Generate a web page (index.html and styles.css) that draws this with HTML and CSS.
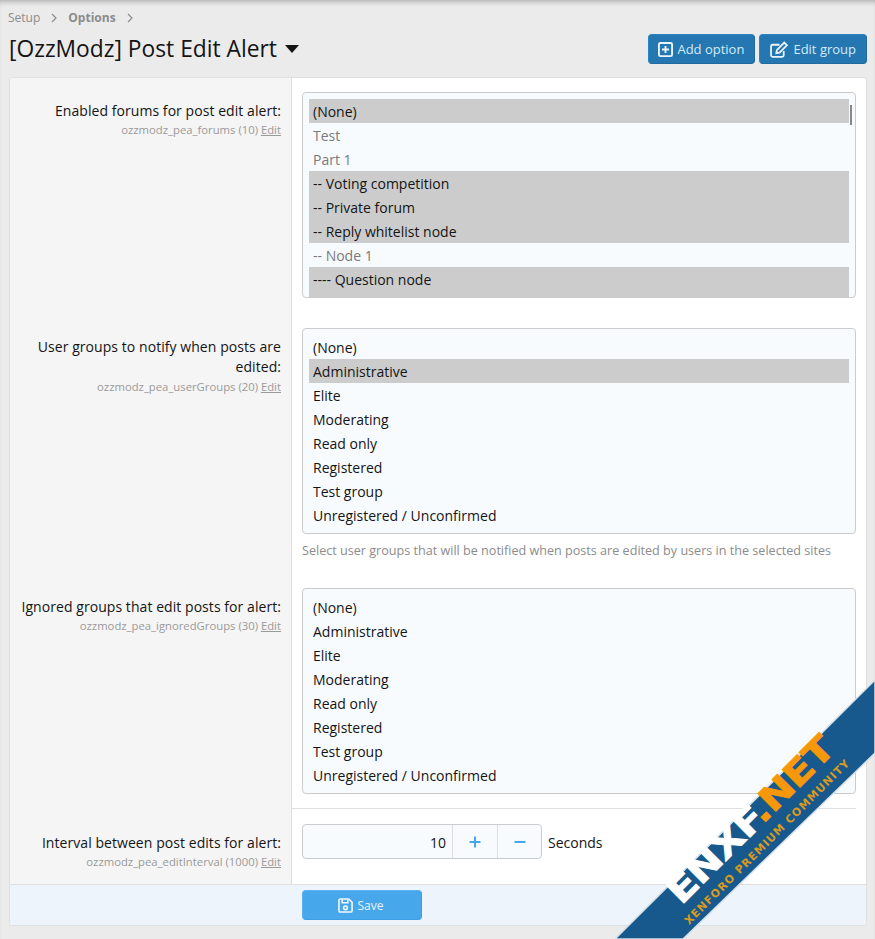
FILE: index.html
```html
<!DOCTYPE html>
<html lang="en">
<head>
  <meta charset="UTF-8" />
  <title>[OzzModz] Post Edit Alert</title>
  <meta name="viewport" content="width=device-width, initial-scale=1.0" />
  <link rel="stylesheet" href="styles.css">
</head>
<body>

  <div class="breadcrumbs">
    <span>Setup</span>
    <svg class="crumb-arrow" viewBox="0 0 6 10"><path d="M1 1l4 4-4 4" /></svg>
    <b>Options</b>
    <svg class="crumb-arrow" viewBox="0 0 6 10"><path d="M1 1l4 4-4 4" /></svg>
  </div>

  <div class="page-header">
    <h1>[OzzModz] Post Edit Alert <span class="caret"></span></h1>
    <div class="header-buttons">
      <a class="button">
        <svg viewBox="0 0 16 16"><rect x="1" y="1" width="14" height="14" rx="1.5" /><path d="M8 4.2v7.6M4.2 8h7.6" /></svg>
        Add option
      </a>
      <a class="button">
        <svg class="wide" viewBox="0 0 18 16"><path d="M13 9.5v4a1.5 1.5 0 0 1-1.500 1.500H2.500A1.500 1.500 0 0 1 1 13.500V5a1.500 1.500 0 0 1 1.500-1.500H9" /><path d="M6.500 8.500L13.500 1.500l2.500 2.500-7 7-3 .5z" /></svg>
        Edit group
      </a>
    </div>
  </div>

  <div class="block">
    <div class="form-row first">
      <div class="label-col">
        <div class="label">Enabled forums for post edit alert:</div>
        <div class="option-id">ozzmodz_pea_forums (10) <u>Edit</u></div>
      </div>
      <div class="input-col">
        <div class="listbox scrolling">
          <div class="opt sel">(None)</div>
          <div class="opt muted">Test</div>
          <div class="opt muted">Part 1</div>
          <div class="opt sel">-- Voting competition</div>
          <div class="opt sel">-- Private forum</div>
          <div class="opt sel">-- Reply whitelist node</div>
          <div class="opt muted">-- Node 1</div>
          <div class="opt sel">---- Question node</div>
          <div class="opt sel"></div>
          <div class="scroll-thumb"></div>
        </div>
      </div>
    </div>

    <div class="form-row">
      <div class="label-col">
        <div class="label">User groups to notify when posts are edited:</div>
        <div class="option-id">ozzmodz_pea_userGroups (20) <u>Edit</u></div>
      </div>
      <div class="input-col">
        <div class="listbox">
          <div class="opt">(None)</div>
          <div class="opt sel">Administrative</div>
          <div class="opt">Elite</div>
          <div class="opt">Moderating</div>
          <div class="opt">Read only</div>
          <div class="opt">Registered</div>
          <div class="opt">Test group</div>
          <div class="opt">Unregistered / Unconfirmed</div>
        </div>
        <div class="hint">Select user groups that will be notified when posts are edited by users in the selected sites</div>
      </div>
    </div>

    <div class="form-row">
      <div class="label-col">
        <div class="label">Ignored groups that edit posts for alert:</div>
        <div class="option-id">ozzmodz_pea_ignoredGroups (30) <u>Edit</u></div>
      </div>
      <div class="input-col">
        <div class="listbox">
          <div class="opt">(None)</div>
          <div class="opt">Administrative</div>
          <div class="opt">Elite</div>
          <div class="opt">Moderating</div>
          <div class="opt">Read only</div>
          <div class="opt">Registered</div>
          <div class="opt">Test group</div>
          <div class="opt">Unregistered / Unconfirmed</div>
        </div>
      </div>
    </div>

    <div class="form-row last">
      <div class="label-col">
        <div class="label">Interval between post edits for alert:</div>
        <div class="option-id">ozzmodz_pea_editInterval (1000) <u>Edit</u></div>
      </div>
      <div class="input-col">
        <div class="divider"></div>
        <div class="spinner-row">
          <div class="spinner">
            <div class="spinner-value">10</div>
            <div class="spinner-btn"><svg viewBox="0 0 12 12"><path d="M6 0.500v11M0.500 6h11" /></svg></div>
            <div class="spinner-btn"><svg viewBox="0 0 12 12"><path d="M0.500 6h11" /></svg></div>
          </div>
          <span class="spinner-unit">Seconds</span>
        </div>
      </div>
    </div>

    <div class="submit-row">
      <a class="button primary">
        <svg viewBox="0 0 16 16"><path d="M1 2.500A1.500 1.500 0 0 1 2.500 1h9L15 4.500v9a1.500 1.500 0 0 1-1.500 1.500h-11A1.500 1.500 0 0 1 1 13.500z" /><path d="M4.500 1.500v3.500h6V1.500" /><circle cx="8" cy="10.500" r="2" /></svg>
        Save
      </a>
    </div>
  </div>

  <div class="watermark">
    <svg class="ribbon" viewBox="0 0 260 259"><path d="M260 0v73L68 259H0z" /></svg>
    <div class="wm-text">
      <div class="wm-big">ENXF<span>.NET</span></div>
      <div class="wm-small">XENFORO PREMIUM COMMUNITY</div>
    </div>
  </div>

</body>
</html>
```

FILE: styles.css
```css
html, body {
  height: 100%;
}

body {
  font-family: 'Open Sans', 'Noto Sans', sans-serif;
  font-size: 14px;
  line-height: 20px;
  background: #ebebeb;
  margin: 0;
  padding: 0 8px 0 9px;
  color: #141414;
  position: relative;
  overflow: hidden;
  box-shadow: inset 0 5px 5px -3px rgba(0,0,0,0.25);
}

.breadcrumbs {
  display: flex;
  align-items: center;
  gap: 11px;
  height: 20px;
  padding-top: 8px;
  margin-left: -1px;
  font-size: 12px;
  color: #8c8c8c;
}

.breadcrumbs b {
  font-weight: 700;
}

.crumb-arrow {
  width: 6px;
  height: 10px;
  fill: none;
  stroke: #8c8c8c;
  stroke-width: 1.2;
}

.page-header {
  display: flex;
  justify-content: space-between;
  align-items: flex-start;
  height: 43px;
  padding-top: 6px;
}

h1 {
  margin: -1px 0 0;
  font-size: 22.8px;
  font-weight: 400;
  line-height: 32px;
  color: #141414;
}

.caret {
  display: inline-block;
  width: 0;
  height: 0;
  margin-left: 2px;
  vertical-align: 4px;
  border-left: 7px solid transparent;
  border-right: 7px solid transparent;
  border-top: 8px solid #141414;
}

.header-buttons {
  display: flex;
  gap: 4px;
}

.button {
  display: flex;
  align-items: center;
  justify-content: center;
  gap: 4px;
  height: 30px;
  box-sizing: border-box;
  padding: 0 10px;
  font-size: 13px;
  color: #d4ebfa;
  background: #2577b1;
  border: 1px solid;
  border-color: #2b84c4 #216a9e #216a9e #2b84c4;
  border-radius: 4px;
}

.header-buttons .button:first-child {
  padding-left: 9px;
}

.button svg {
  width: 15px;
  height: 15px;
  fill: none;
  stroke: #eaf4fb;
  stroke-width: 2;
}

.button svg.wide {
  width: 19px;
  height: 17px;
  stroke-width: 1.7;
}

.block {
  background: #fff;
  border: 1px solid #dfdfdf;
  border-radius: 4px;
  overflow: hidden;
}

.form-row {
  display: grid;
  grid-template-columns: 282px 1fr;
}

.label-col {
  background: #f5f5f5;
  border-right: 1px solid #dfdfdf;
  padding: 24px 10px 0 10px;
  text-align: right;
}

.label {
  line-height: 20.4px;
  letter-spacing: 0.06px;
}

.form-row.first .label-col {
  padding-top: 23px;
}

.option-id {
  font-size: 11.3px;
  line-height: 18px;
  color: #9a9a9a;
}

.input-col {
  padding: 15px 10px 14px 10px;
}

.form-row.first .input-col {
  padding-top: 14px;
  padding-bottom: 15px;
}

.listbox {
  position: relative;
  height: 206px;
  box-sizing: border-box;
  padding: 6px;
  background: #f8fbfe;
  border: 1px solid #cbcbcb;
  border-radius: 4px;
  overflow: hidden;
}

.listbox.scrolling {
  padding-bottom: 0;
}

.opt {
  height: 24px;
  line-height: 25px;
  padding: 0 4px;
  white-space: nowrap;
}

.opt.sel {
  background: #cccccc;
}

.opt.muted {
  color: #7a7a7a;
}

.scroll-thumb {
  position: absolute;
  top: 12px;
  right: 3px;
  width: 2px;
  height: 20px;
  background: #888;
}

.hint {
  font-size: 12.6px;
  line-height: 18px;
  margin-top: 8px;
  margin-bottom: -1px;
  color: #8c8c8c;
}

.form-row.last .label-col {
  padding-top: 25px;
}

.form-row.last .input-col {
  padding: 0 10px 25px 10px;
}

.divider {
  height: 1px;
  margin: 0 0 15px -10px;
  background: #dfdfdf;
}

.spinner-row {
  display: flex;
  align-items: center;
  gap: 6px;
}

.spinner {
  display: flex;
  width: 240px;
  height: 35px;
  box-sizing: border-box;
  background: #f8fbfe;
  border: 1px solid #cbcbcb;
  border-radius: 4px;
}

.spinner-value {
  flex: 1;
  text-align: right;
  line-height: 35px;
  padding-right: 6px;
}

.spinner-btn {
  width: 44px;
  display: flex;
  align-items: center;
  justify-content: center;
  border-left: 1px solid #dfdfdf;
}

.spinner-btn:last-child {
  width: 43px;
}

.spinner-btn svg {
  width: 12px;
  height: 12px;
  fill: none;
  stroke: #47a7eb;
  stroke-width: 2;
}

.spinner-unit {
  padding-top: 2px;
}

.submit-row {
  background: #edf4fb;
  border-top: 1px solid #dfdfdf;
  padding: 5px 0 5px 292px;
  height: 30px;
}

.button.primary {
  width: 120px;
  padding-top: 1px;
  gap: 5px;
  background: #47a7eb;
  border-color: #5cb1ee #3a9fe6 #3a9fe6 #5cb1ee;
  color: #e8f4fd;
  font-size: 12px;
}

.button.primary svg {
  width: 15px;
  height: 15px;
  margin-left: -3px;
  stroke: #f3f9fe;
  stroke-width: 1.7;
}

.watermark {
  position: absolute;
  right: 0;
  bottom: 0;
  width: 260px;
  height: 259px;
  overflow: hidden;
  pointer-events: none;
}

.ribbon {
  position: absolute;
  inset: 0;
  width: 260px;
  height: 259px;
  fill: #17598c;
  stroke: #d4dfe7;
  stroke-width: 1.5;
}

.wm-text {
  position: absolute;
  left: 30px;
  top: 117px;
  width: 220px;
  text-align: center;
  transform: rotate(-45deg);
}

.wm-big {
  font-family: 'DejaVu Sans', sans-serif;
  font-weight: 700;
  font-size: 42px;
  line-height: 38px;
  letter-spacing: -1px;
  color: #fff;
  -webkit-text-stroke: 1px currentColor;
  transform: scaleY(0.82);
  transform-origin: 50% 85%;
}

.wm-big span {
  color: #f7980a;
}

.wm-small {
  position: relative;
  left: -8px;
  margin-top: 5px;
  font-family: 'DejaVu Sans', sans-serif;
  font-weight: 700;
  font-size: 11px;
  line-height: 12px;
  letter-spacing: 1px;
  color: #d99a1e;
  white-space: nowrap;
}
```
